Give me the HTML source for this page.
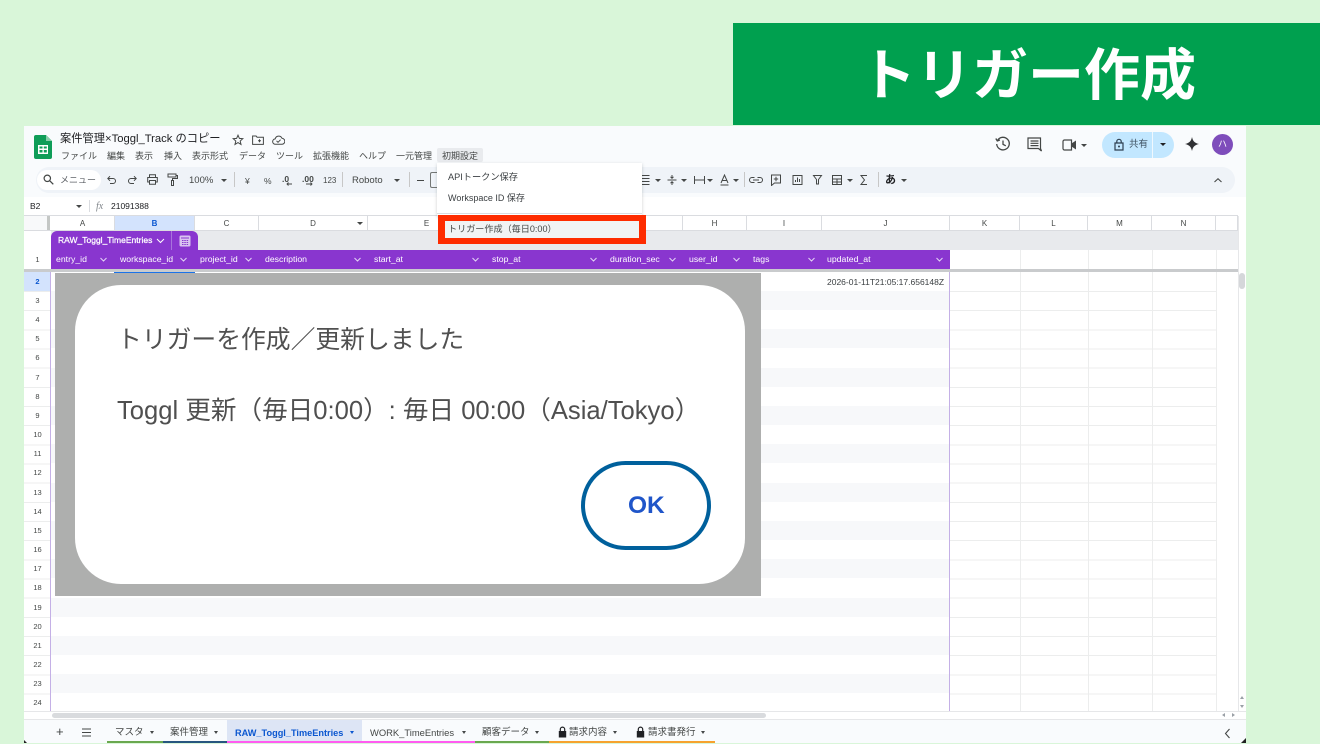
<!DOCTYPE html>
<html lang="ja"><head><meta charset="utf-8"><title>トリガー作成</title>
<style>
*{box-sizing:border-box;margin:0;padding:0}
html,body{width:1320px;height:743px;overflow:hidden;background:#d9f6d9;font-family:"Liberation Sans","Noto Sans CJK JP",sans-serif;color:#3c4043}
div,span,svg{position:absolute}
.t{white-space:nowrap;line-height:14px}
.m{font-size:9px;top:148.500px;color:#444746}
.tb{font-size:9px;top:173.500px;color:#444746}
.cl{top:216px;height:15px;font-size:8px;line-height:15px;text-align:center;color:#444746;background:#fff;border-right:1px solid #dadce0}
.rn{left:24px;width:27px;height:19px;font-size:7.500px;line-height:19px;text-align:center;color:#444746}
.h{top:253px;font-size:8.700px;line-height:13px;color:#fff;white-space:nowrap}
.band{left:51px;width:899px;height:19.200px;background:#f7f8fa}
.vl{top:250px;width:1px;height:461px;background:#eceded}
.tab{top:723px;height:21px;font-size:9.500px;line-height:20px;color:#444746;white-space:nowrap}
.bar{top:741px;height:2px}
</style></head><body>
<div style="left:733px;top:23px;width:587px;height:102px;background:#00a04f"></div>
<div class="t" style="left:860px;top:40px;font-size:56px;line-height:72px;font-weight:700;color:#fff;letter-spacing:0">トリガー作成</div>

<div id="win" style="left:24px;top:126px;width:1222px;height:617px;background:#f9fbfd"></div>

<svg style="left:34px;top:135px" width="18" height="24" viewBox="0 0 18 24"><path d="M2 0h10l6 6v16a2 2 0 0 1-2 2H2a2 2 0 0 1-2-2V2a2 2 0 0 1 2-2z" fill="#0f9d58"/><path d="M12 0l6 6h-6z" fill="#87cea9"/><path d="M4 10h10v9H4z" fill="#fff"/><path d="M5.500 11.500h3v2h-3zM9.800 11.500h3v2h-3zM5.500 15h3v2.500h-3zM9.800 15h3v2.500h-3z" fill="#0f9d58"/></svg>
<div class="t" style="left:60px;top:132px;font-size:11.250px;line-height:15px;color:#202124">案件管理×Toggl_Track のコピー</div>
<svg style="left:232px;top:134px" width="12" height="12" viewBox="0 0 12 12"><path d="M6 1.200l1.400 3.200 3.400.3-2.600 2.300.8 3.400L6 8.600l-3 1.800.8-3.400L1.200 4.700l3.400-.3z" fill="none" stroke="#444746" stroke-width="1"/></svg>
<svg style="left:252px;top:135px" width="12" height="10" viewBox="0 0 12 10"><path d="M.6 1h3.500l1 1.200h6.300v7.200H.6z M6 5.700h3M7.500 4.200v3" fill="none" stroke="#444746" stroke-width="1"/></svg>
<svg style="left:272px;top:135px" width="13" height="10" viewBox="0 0 13 10"><path d="M3.500 9.300a2.700 2.700 0 0 1-.3-5.400 3.600 3.600 0 0 1 6.800-.6 3 3 0 0 1-.4 6zM4.500 5.800l1.500 1.500 2.600-2.600" fill="none" stroke="#444746" stroke-width="1"/></svg>

<div class="t m" style="left:61px">ファイル</div><div class="t m" style="left:107px">編集</div><div class="t m" style="left:135px">表示</div><div class="t m" style="left:164px">挿入</div><div class="t m" style="left:192px">表示形式</div><div class="t m" style="left:239px">データ</div><div class="t m" style="left:276px">ツール</div><div class="t m" style="left:313px">拡張機能</div><div class="t m" style="left:359px">ヘルプ</div><div class="t m" style="left:396px">一元管理</div>
<div style="left:437px;top:148px;width:46px;height:14px;background:#e9ebee;border-radius:2px"></div><div class="t m" style="left:442px">初期設定</div>

<!-- toolbar -->
<div style="left:36px;top:167px;width:1199px;height:26px;border-radius:13px;background:#eff3f8"></div>
<div style="left:37px;top:170px;width:64px;height:20px;border-radius:10px;background:#fff"></div>
<svg style="left:43px;top:174px" width="11" height="11" viewBox="0 0 11 11"><circle cx="4.300" cy="4.300" r="3.200" fill="none" stroke="#444746" stroke-width="1.200"/><path d="M6.800 6.800l3.500 3.500" stroke="#444746" stroke-width="1.300"/></svg>
<div class="t tb" style="left:60px;top:172.500px;color:#5f6368">メニュー</div>
<svg style="left:107px;top:175px" width="10" height="10" viewBox="0 0 10 10"><path d="M1 3.500h5a2.500 2.500 0 0 1 0 5H3M3 1.200L.8 3.500 3 5.800" fill="none" stroke="#444746" stroke-width="1"/></svg>
<svg style="left:127px;top:175px" width="10" height="10" viewBox="0 0 10 10"><path d="M9 3.500H4a2.500 2.500 0 0 0 0 5h3M7 1.200l2.200 2.300L7 5.800" fill="none" stroke="#444746" stroke-width="1"/></svg>
<svg style="left:147px;top:174px" width="11" height="11" viewBox="0 0 11 11"><path d="M2.500 3.500V.8h6v2.700M2.500 8H.7V3.500h9.600V8H8.500M2.500 6.500h6v3.700h-6z" fill="none" stroke="#444746" stroke-width="1"/></svg>
<svg style="left:167px;top:173px" width="11" height="13" viewBox="0 0 11 13"><path d="M1 1h8v3H1zM9 2.500h1.500v3H5.500v2M4.500 7.500h2v5h-2z" fill="none" stroke="#444746" stroke-width="1"/></svg>
<div class="t tb" style="left:189px;font-size:9.500px">100%</div>
<div style="left:221px;top:179px;border:3px solid transparent;border-top:3px solid #444746"></div>
<div style="left:234px;top:172px;width:1px;height:15px;background:#c7c7c7"></div>
<div class="t tb" style="left:245px;font-size:8.500px">¥</div><div class="t tb" style="left:264px;font-size:8.500px">%</div>
<div class="t tb" style="left:282px;top:172px;font-size:8.500px;font-weight:700">.0</div><div class="t tb" style="left:302px;top:172px;font-size:8.500px;font-weight:700">.00</div><div class="t tb" style="left:323px;font-size:8px">123</div>
<svg style="left:284px;top:181px" width="32" height="6" viewBox="0 0 32 6" fill="none" stroke="#444746" stroke-width=".9"><path d="M8 3H3M4.500 1.500L3 3l1.500 1.500M22 3h6M26.500 1.500L28 3l-1.500 1.500"/></svg>
<div style="left:342px;top:172px;width:1px;height:15px;background:#c7c7c7"></div>
<div class="t tb" style="left:352px;font-size:9.500px">Roboto</div>
<div style="left:394px;top:179px;border:3px solid transparent;border-top:3px solid #444746"></div>
<div style="left:409px;top:172px;width:1px;height:15px;background:#c7c7c7"></div>
<div style="left:417px;top:180px;width:7px;height:1px;background:#444746"></div>
<div style="left:430px;top:172px;width:8px;height:16px;border:1px solid #747775;border-right:0;border-radius:2px 0 0 2px"></div>

<svg style="left:640px;top:174px" width="240" height="12" viewBox="0 0 240 12" fill="none" stroke="#444746" stroke-width="1"><path d="M.5 1.500h9M.5 4.500h9M.5 7.500h9M.5 10.500h9"/><path d="M32 1v3M30.500 2.800L32 4.300l1.500-1.500M27.500 6h9M32 11V8M30.500 9.200L32 7.700l1.500 1.500"/><path d="M54.500 2v8M64.500 2v8M55 6h9"/><path d="M81 9l3.500-8L88 9M82.200 6.500h4.500M80.500 11h8"/><path d="M114.500 3.500H112a2.500 2.500 0 0 0 0 5h2.500M117.500 3.500h2.500a2.500 2.500 0 0 1 0 5h-2.500M113 6h6"/><path d="M131.500 1h9v8h-6l-3 2.500zM136 2.800v4.400M133.800 5h4.400"/><path d="M153 1.500h9v9h-9zM155.500 8V6M157.500 8V3.500M159.500 8V5"/><path d="M173.500 1.500h8l-3 4v4.500h-2V5.500z"/><path d="M192.500 1.500h9v9h-9zM192.500 5h9M192.500 8h9M197 5v5.500"/><path d="M227 1.500h-6l3.500 4.500-3.500 4.500h6"/></svg>
<div style="left:655px;top:179px;border:3px solid transparent;border-top:3px solid #444746"></div>
<div style="left:681px;top:179px;border:3px solid transparent;border-top:3px solid #444746"></div>
<div style="left:707px;top:179px;border:3px solid transparent;border-top:3px solid #444746"></div>
<div style="left:733px;top:179px;border:3px solid transparent;border-top:3px solid #444746"></div>
<div style="left:847px;top:179px;border:3px solid transparent;border-top:3px solid #444746"></div>
<div style="left:744px;top:172px;width:1px;height:15px;background:#c7c7c7"></div>
<div style="left:878px;top:172px;width:1px;height:15px;background:#c7c7c7"></div>
<div class="t" style="left:885px;top:173px;font-size:11px;font-weight:700;color:#202124">あ</div>
<div style="left:901px;top:179px;border:3px solid transparent;border-top:3px solid #444746"></div>
<svg style="left:1213px;top:177px" width="10" height="7" viewBox="0 0 10 7"><path d="M1.500 5L5 1.700 8.500 5" fill="none" stroke="#444746" stroke-width="1.100"/></svg>

<!-- top right -->
<svg style="left:995px;top:136px" width="16" height="16" viewBox="0 0 16 16"><path d="M2.500 4.500A6.300 6.300 0 1 1 1.700 8M.8 2.500l1.500 2.500 2.600-1M8 4.500v3.800l2.800 1.500" fill="none" stroke="#444746" stroke-width="1.300"/></svg>
<svg style="left:1027px;top:137px" width="15" height="15" viewBox="0 0 15 15"><path d="M1 1h12.500v10.500l1 2.500-3-2.500H1zM3.500 4h8M3.500 6.300h8M3.500 8.600h8" fill="none" stroke="#444746" stroke-width="1.200"/></svg>
<svg style="left:1062px;top:139px" width="15" height="12" viewBox="0 0 15 12"><path d="M1 2.500a1.500 1.500 0 0 1 1.500-1.500H9.500v10H2.500A1.500 1.500 0 0 1 1 9.500z" fill="none" stroke="#444746" stroke-width="1.200"/><path d="M9.500 4.500L14 1.500v9L9.500 7.500z" fill="#444746"/></svg>
<div style="left:1081px;top:144px;border:3px solid transparent;border-top:3px solid #444746"></div>
<div style="left:1102px;top:132px;width:72px;height:26px;border-radius:13px;background:#c2e7ff"></div>
<div style="left:1152px;top:132px;width:1px;height:26px;background:#f0f8fe"></div>
<svg style="left:1114px;top:138px" width="10" height="13" viewBox="0 0 10 13"><path d="M2.800 5V3.500a2.200 2.200 0 0 1 4.400 0V5M1 5h8v7H1z" fill="none" stroke="#2d3e4f" stroke-width="1.200"/><circle cx="5" cy="8.500" r="1" fill="#2d3e4f"/></svg>
<div class="t" style="left:1129px;top:138px;font-size:9.500px;color:#3f5161">共有</div>
<div style="left:1160px;top:143px;border:3px solid transparent;border-top:3px solid #202124"></div>
<svg style="left:1185px;top:137px" width="14" height="14" viewBox="0 0 14 14"><path d="M7 0c.8 4 2.500 6 7 7-4.500 1-6.200 3-7 7-.8-4-2.500-6-7-7 4.500-1 6.200-3 7-7z" fill="#303134"/></svg>
<div style="left:1212px;top:134px;width:21px;height:21px;border-radius:50%;background:#7e4dbb;color:#fff;font-size:9px;line-height:21px;text-align:center">ハ</div>

<!-- formula -->
<div style="left:24px;top:197px;width:1222px;height:19px;background:#fff"></div>
<div class="t" style="left:30px;top:199px;font-size:8.500px;color:#202124">B2</div>
<div style="left:76px;top:205px;border:3px solid transparent;border-top:3px solid #444746"></div>
<div style="left:89px;top:200px;width:1px;height:12px;background:#dadce0"></div>
<div class="t" style="left:96px;top:200px;font-size:10px;font-style:italic;color:#80868b;font-family:'Liberation Serif',serif">fx</div>
<div class="t" style="left:111px;top:199px;font-size:8.500px;color:#202124">21091388</div>

<!-- grid -->
<div style="left:24px;top:215px;width:1214px;height:497px;background:#fff;border-top:1px solid #dadce0"></div>
<div style="left:24px;top:216px;width:26px;height:15px;background:#f8f9fa;border-right:3px solid #c4c7c5"></div>
<div class="cl" style="left:51px;width:64px">A</div><div class="cl" style="left:115px;width:80px;background:#d3e3fd;font-weight:700;color:#0b57d0">B</div><div class="cl" style="left:195px;width:64px">C</div><div class="cl" style="left:259px;width:109px">D</div><div class="cl" style="left:368px;width:118px">E</div><div class="cl" style="left:486px;width:118px"></div><div class="cl" style="left:604px;width:79px"></div><div class="cl" style="left:683px;width:64px">H</div><div class="cl" style="left:747px;width:75px">I</div><div class="cl" style="left:822px;width:128px">J</div><div class="cl" style="left:950px;width:70px">K</div><div class="cl" style="left:1020px;width:68px">L</div><div class="cl" style="left:1088px;width:64px">M</div><div class="cl" style="left:1152px;width:64px">N</div><div class="cl" style="left:1216px;width:22px"></div>
<div style="left:357px;top:222px;border:3px solid transparent;border-top:3px solid #444746"></div>
<div style="left:24px;top:230px;width:1214px;height:1px;background:#dadce0"></div>
<div style="left:51px;top:231px;width:1187px;height:19px;background:#e8eaed"></div>
<div style="left:51px;top:231px;width:147px;height:19px;background:#8936cf;border-radius:6px 6px 0 0"></div>
<div class="t" style="left:58px;top:234px;font-size:8.500px;-webkit-text-stroke:.25px #fff;color:#fff;line-height:13px">RAW_Toggl_TimeEntries</div>
<svg style="left:156px;top:238px" width="9" height="6" viewBox="0 0 9 6"><path d="M1 1l3.500 3.500L8 1" fill="none" stroke="#fff" stroke-width="1"/></svg>
<div style="left:171px;top:231px;width:1px;height:19px;background:#a874dc"></div>
<svg style="left:179px;top:235px" width="12" height="12" viewBox="0 0 12 12"><rect x=".5" y=".5" width="11" height="11" rx="1.500" fill="#d9c2f0"/><path d="M2 3h8M3 5.500h1.500M5.300 5.500h1.500M7.600 5.500h1.500M3 7.500h1.500M5.300 7.500h1.500M7.600 7.500h1.500M3 9.500h1.500M5.300 9.500h1.500M7.600 9.500h1.500" stroke="#8936cf" stroke-width="1"/></svg>

<div class="band" style="top:291px"></div><div class="band" style="top:329.300px"></div><div class="band" style="top:367.700px"></div><div class="band" style="top:406px"></div><div class="band" style="top:444.300px"></div><div class="band" style="top:482.700px"></div><div class="band" style="top:521px"></div><div class="band" style="top:559.300px"></div><div class="band" style="top:597.700px"></div><div class="band" style="top:636px"></div><div class="band" style="top:674.300px"></div>
<div class="vl" style="left:1020px"></div><div class="vl" style="left:1088px"></div><div class="vl" style="left:1152px"></div><div class="vl" style="left:1216px"></div>
<div style="left:950px;top:291px;width:266px;height:420px;background:repeating-linear-gradient(to bottom,#eceded 0,#eceded 1px,transparent 1px,transparent 19.170px)"></div>
<div style="left:50px;top:272px;width:1px;height:439px;background:#c4b0e6"></div>
<div style="left:949px;top:272px;width:1px;height:439px;background:#c4b0e6"></div>

<div style="left:51px;top:250px;width:899px;height:19px;background:#8936cf"></div>
<div class="h" style="left:56px">entry_id</div><div class="h" style="left:120px">workspace_id</div><div class="h" style="left:200px">project_id</div><div class="h" style="left:265px">description</div><div class="h" style="left:374px">start_at</div><div class="h" style="left:492px">stop_at</div><div class="h" style="left:610px">duration_sec</div><div class="h" style="left:689px">user_id</div><div class="h" style="left:753px">tags</div><div class="h" style="left:827px">updated_at</div>
<svg style="left:51px;top:250px" width="899" height="19" viewBox="0 0 899 19" fill="none" stroke="#e3d3f5" stroke-width="1"><path d="M49.500 8l3 3 3-3M129.500 8l3 3 3-3M194.500 8l3 3 3-3M303.500 8l3 3 3-3M421.500 8l3 3 3-3M539.500 8l3 3 3-3M618.500 8l3 3 3-3M682.500 8l3 3 3-3M757.500 8l3 3 3-3M885.500 8l3 3 3-3"/></svg>
<div style="left:24px;top:269px;width:1216px;height:3px;background:#c9cbcd"></div>
<div style="left:114px;top:272px;width:81px;height:1px;background:#1a73e8"></div>

<div style="left:24px;top:272px;width:26px;height:19px;background:#d3e3fd"></div>
<div class="rn" style="top:250px">1</div><div class="rn" style="top:272px;font-weight:700;color:#0b57d0">2</div><div class="rn" style="top:291px">3</div><div class="rn" style="top:310px">4</div><div class="rn" style="top:329px">5</div><div class="rn" style="top:348px">6</div><div class="rn" style="top:368px">7</div><div class="rn" style="top:387px">8</div><div class="rn" style="top:406px">9</div><div class="rn" style="top:425px">10</div><div class="rn" style="top:444px">11</div><div class="rn" style="top:463px">12</div><div class="rn" style="top:483px">13</div><div class="rn" style="top:502px">14</div><div class="rn" style="top:521px">15</div><div class="rn" style="top:540px">16</div><div class="rn" style="top:559px">17</div><div class="rn" style="top:578px">18</div><div class="rn" style="top:598px">19</div><div class="rn" style="top:617px">20</div><div class="rn" style="top:636px">21</div><div class="rn" style="top:655px">22</div><div class="rn" style="top:674px">23</div><div class="rn" style="top:693px">24</div>
<div style="left:24px;top:291px;width:26px;height:420px;background:repeating-linear-gradient(to bottom,#eceded 0,#eceded 1px,transparent 1px,transparent 19.170px)"></div>
<div class="t" style="left:827px;top:275px;font-size:8.500px;color:#3c4043">2026-01-11T21:05:17.656148Z</div>

<!-- scrollbars -->
<div style="left:1238px;top:216px;width:8px;height:496px;background:#fff;border-left:1px solid #e6e7e9"></div>
<div style="left:1239px;top:273px;width:6px;height:16px;border-radius:3px;background:#d5d7da"></div>
<div style="left:1240px;top:694px;border:2.500px solid transparent;border-bottom:3px solid #9aa0a6"></div>
<div style="left:1240px;top:705px;border:2.500px solid transparent;border-top:3px solid #9aa0a6"></div>
<div style="left:24px;top:711px;width:1222px;height:9px;background:#fff;border-top:1px solid #e6e7e9"></div>
<div style="left:52px;top:713px;width:714px;height:5px;border-radius:3px;background:#d9dbde"></div>
<div style="left:1220px;top:713px;border:2.500px solid transparent;border-right:3px solid #9aa0a6"></div>
<div style="left:1232px;top:713px;border:2.500px solid transparent;border-left:3px solid #9aa0a6"></div>
<div style="left:24px;top:719px;width:1222px;height:1px;background:#e6e7e9"></div>

<!-- tabs -->
<div class="t" style="left:56px;top:725px;font-size:13px;color:#444746">+</div>
<svg style="left:81px;top:728px" width="11" height="9" viewBox="0 0 11 9"><path d="M1 1h9M1 4.500h9M1 8h9" stroke="#444746" stroke-width="1"/></svg>
<div style="left:227px;top:720px;width:135px;height:23px;background:#dde5f5"></div>
<div class="tab" style="left:115px">マスタ</div><div style="left:150px;top:731px;border:2.500px solid transparent;border-top:3px solid #444746"></div>
<div class="tab" style="left:170px">案件管理</div><div style="left:214px;top:731px;border:2.500px solid transparent;border-top:3px solid #444746"></div>
<div class="tab" style="left:235px;color:#0b57d0;font-weight:700;font-size:9.200px">RAW_Toggl_TimeEntries</div><div style="left:350px;top:731px;border:2.500px solid transparent;border-top:3px solid #0b57d0"></div>
<div class="tab" style="left:370px;font-size:9.400px">WORK_TimeEntries</div><div style="left:462px;top:731px;border:2.500px solid transparent;border-top:3px solid #444746"></div>
<div class="tab" style="left:482px">顧客データ</div><div style="left:535px;top:731px;border:2.500px solid transparent;border-top:3px solid #444746"></div>
<svg style="left:558px;top:726px" width="9" height="12" viewBox="0 0 9 12"><path d="M2.300 5V3.300a2.200 2.200 0 0 1 4.400 0V5" fill="none" stroke="#202124" stroke-width="1.200"/><rect x=".8" y="5" width="7.400" height="6.500" fill="#202124"/></svg>
<div class="tab" style="left:569px">請求内容</div><div style="left:613px;top:731px;border:2.500px solid transparent;border-top:3px solid #444746"></div>
<svg style="left:636px;top:726px" width="9" height="12" viewBox="0 0 9 12"><path d="M2.300 5V3.300a2.200 2.200 0 0 1 4.400 0V5" fill="none" stroke="#202124" stroke-width="1.200"/><rect x=".8" y="5" width="7.400" height="6.500" fill="#202124"/></svg>
<div class="tab" style="left:648px">請求書発行</div><div style="left:701px;top:731px;border:2.500px solid transparent;border-top:3px solid #444746"></div>
<div class="bar" style="left:107px;width:56px;background:#6aa84f"></div><div class="bar" style="left:163px;width:64px;background:#27567f"></div><div class="bar" style="left:227px;width:135px;background:#ff5cf0"></div><div class="bar" style="left:362px;width:113px;background:#ff5cf0"></div><div class="bar" style="left:475px;width:74px;background:#6aa84f"></div><div class="bar" style="left:549px;width:78px;background:#f6a22e"></div><div class="bar" style="left:627px;width:88px;background:#f6a22e"></div>
<svg style="left:1224px;top:728px" width="7" height="11" viewBox="0 0 7 11"><path d="M5.500 1L1.500 5.500l4 4.500" fill="none" stroke="#444746" stroke-width="1.100"/></svg>
<svg style="left:1241px;top:738px" width="5" height="5" viewBox="0 0 5 5"><path d="M5 0v5H0z" fill="#222"/></svg>
<svg style="left:24px;top:740px" width="3" height="3" viewBox="0 0 3 3"><path d="M0 0l3 3H0z" fill="#222"/></svg>

<!-- menu -->
<div style="left:437px;top:163px;width:205px;height:54px;background:#fff;box-shadow:0 1px 3px rgba(60,64,67,.25);border-radius:0 0 3px 3px"></div>
<div style="left:437px;top:213px;width:205px;height:1px;background:#dadce0"></div>
<div class="t" style="left:448px;top:170px;font-size:9.200px;color:#3c4043">APIトークン保存</div>
<div class="t" style="left:448px;top:191px;font-size:9px;color:#3c4043">Workspace ID 保存</div>
<div style="left:438px;top:215px;width:208px;height:29px;background:#f1f3f4;border:6px solid #fe2c00;border-width:6px 7px"></div>
<div class="t" style="left:448px;top:222px;font-size:9.100px;color:#444746">トリガー作成（毎日0:00）</div>

<!-- dialog -->
<div style="left:55px;top:273px;width:706px;height:323px;background:#aeafae"></div>
<div style="left:75px;top:285px;width:670px;height:299px;background:#fff;border-radius:46px"></div>
<div class="t" style="left:117px;top:325px;font-size:24.800px;line-height:32px;color:#505050">トリガーを作成／更新しました</div>
<div class="t" style="left:117px;top:394.500px;font-size:25.600px;line-height:32px;color:#4f4f4f">Toggl 更新（毎日0:00）: 毎日 00:00（Asia/Tokyo）</div>
<div style="left:581px;top:461px;width:130px;height:89px;border:4px solid #00609c;border-radius:45px;background:#fff"></div>
<div class="t" style="left:628px;top:490px;font-size:24.500px;line-height:32px;font-weight:700;color:#1f55c9">OK</div>
</body></html>
